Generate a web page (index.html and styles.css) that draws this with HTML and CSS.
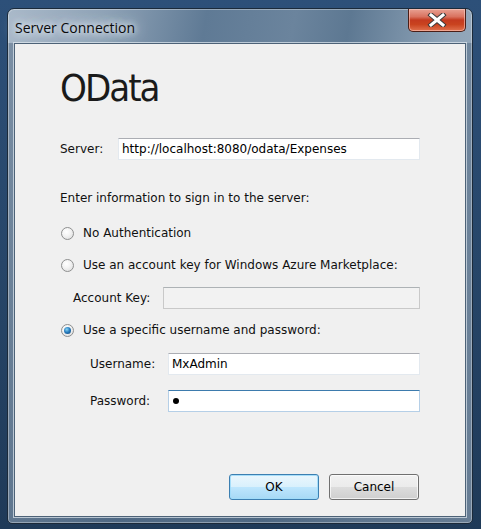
FILE: index.html
```html
<!DOCTYPE html>
<html>
<head>
<meta charset="utf-8">
<link rel="stylesheet" href="styles.css">
</head>
<body>
<div class="window">
  <div class="titlebar">
    <span class="title">Server Connection</span>
    <div class="close">
      <svg width="22" height="14" viewBox="0 0 22 14">
        <path d="M5 2 L17 12 M17 2 L5 12" stroke="#3b3b3b" stroke-width="5" stroke-linecap="square" fill="none"/>
        <path d="M5 2 L17 12 M17 2 L5 12" stroke="#ffffff" stroke-width="3" stroke-linecap="square" fill="none"/>
      </svg>
    </div>
  </div>
  <div class="client">
    <div class="heading">OData</div>
    <div class="row server-row">
      <span class="label server-label">Server:</span>
      <div class="field server-field">http://localhost:8080/odata/Expenses</div>
    </div>
    <div class="text-row">Enter information to sign in to the server:</div>
    <div class="radio-row r1"><span class="radio"></span><span>No Authentication</span></div>
    <div class="radio-row r2"><span class="radio"></span><span>Use an account key for Windows Azure Marketplace:</span></div>
    <div class="row account-row">
      <span class="label account-label">Account Key:</span>
      <div class="field disabled account-field"></div>
    </div>
    <div class="radio-row r3"><span class="radio checked"></span><span>Use a specific username and password:</span></div>
    <div class="row user-row">
      <span class="label user-label">Username:</span>
      <div class="field user-field">MxAdmin</div>
    </div>
    <div class="row pass-row">
      <span class="label user-label">Password:</span>
      <div class="field focused user-field"><span class="dot"></span></div>
    </div>
    <div class="buttons">
      <div class="btn default">OK</div>
      <div class="btn">Cancel</div>
    </div>
  </div>
</div>
</body>
</html>
```
FILE: styles.css
```css
html, body {
  margin: 0;
  padding: 0;
}
body {
  width: 481px;
  height: 529px;
  overflow: hidden;
  background: linear-gradient(to bottom, #2d5079 0%, #274669 50%, #1f3a58 100%);
  font-family: "DejaVu Sans", sans-serif;
  font-size: 12px;
  color: #111;
}
.window {
  box-sizing: border-box;
  margin: 8px 0 0 7px;
  width: 466px;
  height: 516px;
  border: 1px solid #1b2a3a;
  border-radius: 7px 7px 5px 5px;
  padding: 0 6px 6px 6px;
  display: flex;
  flex-direction: column;
  background:
    linear-gradient(to bottom, rgba(255,255,255,0) 0px, rgba(255,255,255,0) 34px, rgba(70,95,122,0.45) 34px, rgba(70,95,122,0.65) 100%),
    linear-gradient(100deg, #a9b9c9 0%, #8ea2b6 18%, #5f7a95 36%, #6b849d 52%, #5d7892 62%, #8ea3b7 80%, #a3b4c5 100%);
  box-shadow: inset 0 0 0 1px rgba(255,255,255,0.35);
}
.titlebar {
  height: 34px;
  display: flex;
  align-items: flex-start;
}
.title {
  margin: 9px 0 0 1px;
  font-family: "Open Sans", "Noto Sans", sans-serif;
  font-size: 14px;
  line-height: 20px;
  color: #0a0a0a;
  text-shadow: 0 0 6px #e6ecf2, 0 0 10px #dde5ee, 0 0 14px #d0dbe6, 0 0 18px rgba(220,229,238,0.9);
}
.close {
  margin-left: auto;
  margin-right: 0;
  width: 58px;
  height: 23px;
  box-sizing: border-box;
  border: 1px solid #4a1e17;
  border-top: none;
  border-radius: 0 0 5px 5px;
  background: linear-gradient(to bottom, #e8a193 0%, #d9725f 35%, #c43a1f 50%, #c9431f 70%, #e0724f 100%);
  box-shadow: inset 0 0 0 1px rgba(255,210,200,0.55);
  display: flex;
  align-items: center;
  justify-content: center;
}
.client {
  box-sizing: border-box;
  width: 452px;
  height: 474px;
  background: #f0f0f0;
  border: 1px solid #4d6277;
  box-shadow: 0 0 0 1px rgba(225,233,241,0.7);
  padding: 0 45px 16px 45px;
  display: flex;
  flex-direction: column;
}
.heading {
  margin-top: 25px;
  height: 38px;
  font-family: "DejaVu Sans Condensed", "DejaVu Sans", sans-serif;
  font-size: 38px;
  line-height: 38px;
  letter-spacing: -2px;
  color: #1a1a1a;
}
.row {
  display: flex;
  align-items: center;
  height: 22px;
}
.label {
  flex: none;
}
.server-row { margin-top: 31px; }
.server-label { width: 58px; }
.account-row { margin-top: 12px; }
.account-label { width: 90px; margin-left: 13px; }
.user-row { margin-top: 13px; }
.pass-row { margin-top: 15px; }
.user-label { width: 78px; margin-left: 30px; }
.field {
  box-sizing: border-box;
  flex: 1;
  height: 22px;
  background: #fff;
  border: 1px solid #e3e9ef;
  border-top-color: #abadb3;
  padding-left: 3px;
  display: flex;
  align-items: center;
  color: #000;
}
.field.disabled {
  background: #f2f2f2;
  border-color: #c9c9c9;
  border-top-color: #adb2b5;
}
.field.focused {
  border-color: #b5cfe7;
  border-top-color: #3d7bad;
}
.dot {
  width: 6px;
  height: 6px;
  border-radius: 50%;
  background: #000;
  margin-left: 1px;
}
.text-row {
  margin-top: 28px;
  height: 20px;
  line-height: 20px;
}
.radio-row {
  height: 20px;
  display: flex;
  align-items: center;
}
.r1 { margin-top: 15px; }
.r2 { margin-top: 12px; }
.r3 { margin-top: 11px; }
.radio {
  box-sizing: border-box;
  width: 13px;
  height: 13px;
  margin-left: 1px;
  margin-right: 9px;
  border-radius: 50%;
  border: 1px solid #8e8f8f;
  background: radial-gradient(circle at 40% 35%, #ffffff 0%, #f4f4f4 40%, #d8d8d8 100%);
  position: relative;
}
.radio.checked::after {
  content: "";
  position: absolute;
  left: 2px;
  top: 2px;
  width: 7px;
  height: 7px;
  border-radius: 50%;
  background: radial-gradient(circle at 40% 35%, #8ad6f5 0%, #2a7fc0 45%, #0d3f73 100%);
}
.buttons {
  margin-top: auto;
  display: flex;
  justify-content: flex-end;
  gap: 10px;
  margin-right: 1px;
}
.btn {
  box-sizing: border-box;
  width: 90px;
  height: 26px;
  border: 1px solid #707070;
  border-radius: 3px;
  background: linear-gradient(to bottom, #f2f2f2 0%, #ebebeb 50%, #dddddd 50%, #cfcfcf 100%);
  box-shadow: inset 0 0 0 1px rgba(255,255,255,0.7);
  display: flex;
  align-items: center;
  justify-content: center;
  color: #000;
}
.btn.default {
  border-color: #3c7fb1;
  background: linear-gradient(to bottom, #eaf6fd 0%, #d9f0fc 50%, #bee6fd 50%, #a7d9f5 100%);
  box-shadow: inset 0 0 0 1px rgba(160,220,250,0.9);
}
```
